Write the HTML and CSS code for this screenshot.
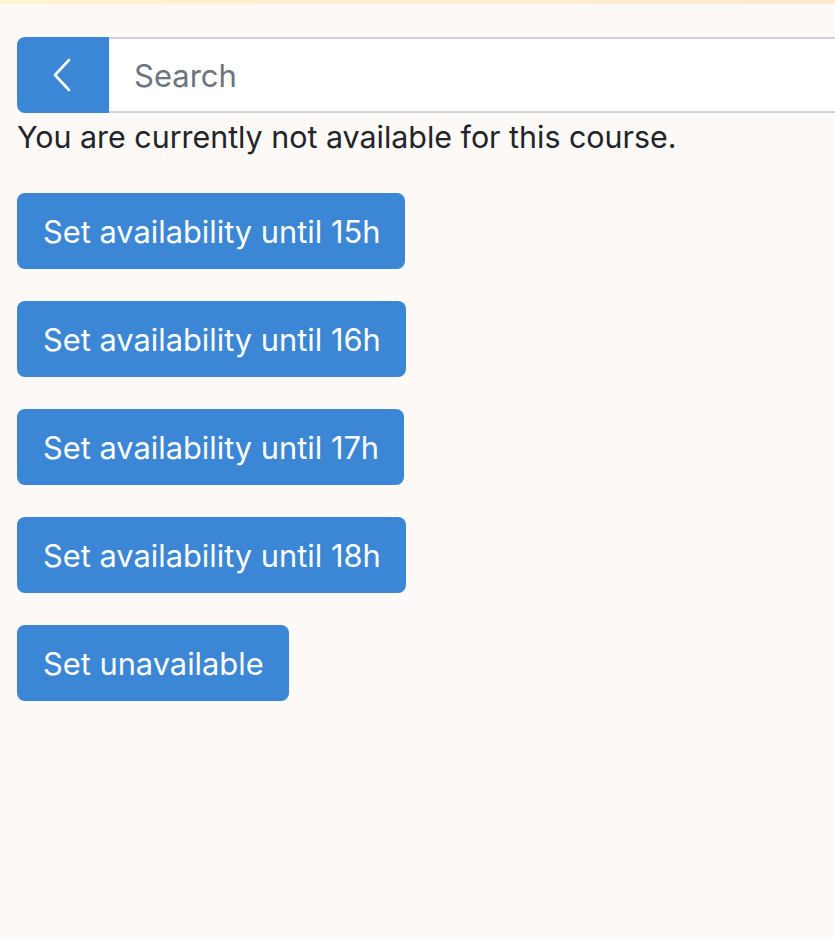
FILE: index.html
```html
<!DOCTYPE html>
<html lang="en">
<head>
<meta charset="utf-8">
<title>Availability</title>
<link rel="stylesheet" href="styles.css">
</head>
<body>
<div class="topbar"></div>
<main class="main">
  <div class="input-group">
    <button class="back-btn" type="button" aria-label="Back">
      <svg width="20" height="34" viewBox="0 0 20 34" fill="none" stroke="#fff" stroke-width="2.6" stroke-linecap="round" stroke-linejoin="round"><path d="M17 2 L3 17 L17 32"/></svg>
    </button>
    <input class="search" type="text" placeholder="Search">
  </div>
  <p class="status">You are currently not available for this course.</p>
  <div class="actions">
    <button class="btn" type="button">Set availability until 15h</button>
    <button class="btn" type="button">Set availability until 16h</button>
    <button class="btn" type="button">Set availability until 17h</button>
    <button class="btn" type="button">Set availability until 18h</button>
    <button class="btn" type="button">Set unavailable</button>
  </div>
</main>
</body>
</html>
```

FILE: styles.css
```css
html, body {
  margin: 0;
  padding: 0;
}
body {
  background: #fdf9f6;
  font-family: Inter, "Liberation Sans", sans-serif;
  color: #212529;
  overflow: hidden;
  height: 937px;
}
.topbar {
  height: 4px;
  background: linear-gradient(90deg, #fdf3cf, #fde9cf);
}
.main {
  padding: 33px 0 0 17px;
}
.input-group {
  display: flex;
  height: 76px;
}
.back-btn {
  width: 92px;
  flex: none;
  border: none;
  border-radius: 8px 0 0 8px;
  background: #3b86d5;
  display: flex;
  align-items: center;
  justify-content: center;
  padding: 0;
}
.back-btn svg {
  margin-right: 2px;
}
.search {
  flex: 1;
  min-width: 0;
  border: 2px solid #ced4da;
  border-left: none;
  border-right: none;
  background: #fff;
  padding: 0 25px;
  font-family: inherit;
  font-size: 31px;
  color: #212529;
  outline: none;
}
.search::placeholder {
  color: #6c757d;
}
.status {
  margin: 0 0 32px;
  font-size: 30.4px;
  line-height: 48px;
}
.actions {
  display: flex;
  flex-direction: column;
  align-items: flex-start;
  gap: 32px;
}
.btn {
  height: 76px;
  padding: 0 25px 0 26px;
  border: none;
  border-radius: 8px;
  background: #3b86d5;
  color: #fff;
  font-family: inherit;
  font-size: 30.8px;
}
```
